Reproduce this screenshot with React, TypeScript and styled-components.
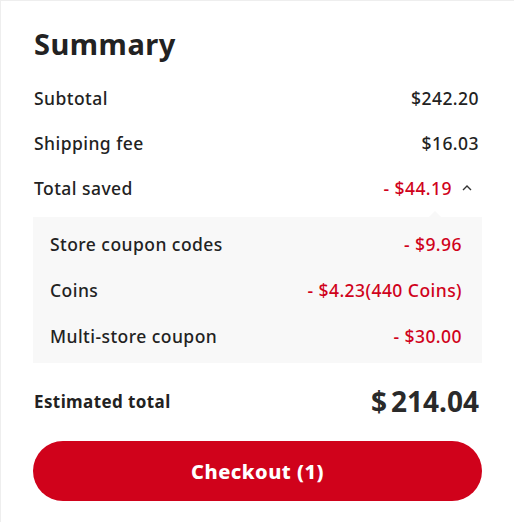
import React from "react";
import styled, { createGlobalStyle } from "styled-components";

const Global = createGlobalStyle`
  html, body { margin: 0; padding: 0; background: #ffffff; }
  body { font-family: "Noto Sans", Lato, sans-serif; color: #222; }
`;

const Card = styled.div`
  box-sizing: border-box;
  width: 514px;
  height: 522px;
  border-top: 1px solid #eeeeee;
  border-left: 1px solid #eeeeee;
  padding: 0 32px 0 32px;
  display: flex;
  flex-direction: column;
`;

const Title = styled.h1`
  margin: 24px 0 0 1px;
  height: 38px;
  line-height: 38px;
  font-size: 29px;
  font-weight: 700;
  letter-spacing: 0.5px;
  color: #222;
`;

const Rows = styled.div`
  margin-top: 12px;
  display: flex;
  flex-direction: column;
`;

const Row = styled.div`
  height: 45px;
  display: flex;
  align-items: center;
  justify-content: space-between;
  padding: 0 3px 0 1px;
  font-size: 17.5px;
  font-weight: 500;
  letter-spacing: 0.45px;
  color: #222;
`;

const Value = styled.span<{ $red?: boolean }>`
  color: ${(p) => (p.$red ? "#d0021b" : "#222")};
  font-weight: 500;
`;

const SavedValue = styled.span`
  display: flex;
  align-items: center;
  gap: 10px;
  color: #d0021b;
`;

const Chevron = styled.svg`
  width: 10px;
  height: 7px;
  margin-right: 7px;
`;

const Breakdown = styled.div`
  position: relative;
  margin-top: 7px;
  background: #f8f8f8;
  padding: 4px 20px 4px 17px;
  display: flex;
  flex-direction: column;
  &::before {
    content: "";
    position: absolute;
    top: -6px;
    left: 396px;
    border-left: 6px solid transparent;
    border-right: 6px solid transparent;
    border-bottom: 6px solid #f8f8f8;
  }
`;

const SubRow = styled.div`
  height: 46px;
  display: flex;
  align-items: center;
  justify-content: space-between;
  font-size: 17.5px;
  font-weight: 500;
  letter-spacing: 0.45px;
  color: #222;
`;

const TotalRow = styled.div`
  height: 52px;
  margin-top: 12px;
  display: flex;
  align-items: center;
  justify-content: space-between;
  padding: 0 3px 0 1px;
`;

const TotalLabel = styled.span`
  font-size: 17px;
  font-weight: 700;
  letter-spacing: 0.4px;
  color: #222;
`;

const TotalValue = styled.span`
  font-size: 28px;
  font-weight: 700;
  color: #2a2a2a;
  display: flex;
  align-items: baseline;
  gap: 4px;
`;

const CheckoutButton = styled.button`
  margin-top: 14px;
  height: 60px;
  border: none;
  border-radius: 30px;
  background: #d0021b;
  color: #fff;
  font-family: "Noto Sans", Lato, sans-serif;
  font-size: 20px;
  font-weight: 800;
  letter-spacing: 0.5px;
  cursor: pointer;
`;

export default function App() {
  return (
    <>
      <Global />
      <Card>
        <Title>Summary</Title>
        <Rows>
          <Row>
            <span>Subtotal</span>
            <Value>$242.20</Value>
          </Row>
          <Row>
            <span>Shipping fee</span>
            <Value>$16.03</Value>
          </Row>
          <Row>
            <span>Total saved</span>
            <SavedValue>
              - $44.19
              <Chevron viewBox="0 0 10 7">
                <path d="M1 6 L5 2 L9 6" fill="none" stroke="#333" strokeWidth="1.4" />
              </Chevron>
            </SavedValue>
          </Row>
        </Rows>
        <Breakdown>
          <SubRow>
            <span>Store coupon codes</span>
            <Value $red>- $9.96</Value>
          </SubRow>
          <SubRow>
            <span>Coins</span>
            <Value $red>- $4.23(440 Coins)</Value>
          </SubRow>
          <SubRow>
            <span>Multi-store coupon</span>
            <Value $red>- $30.00</Value>
          </SubRow>
        </Breakdown>
        <TotalRow>
          <TotalLabel>Estimated total</TotalLabel>
          <TotalValue>
            <span>$</span>
            <span>214.04</span>
          </TotalValue>
        </TotalRow>
        <CheckoutButton>Checkout (1)</CheckoutButton>
      </Card>
    </>
  );
}
